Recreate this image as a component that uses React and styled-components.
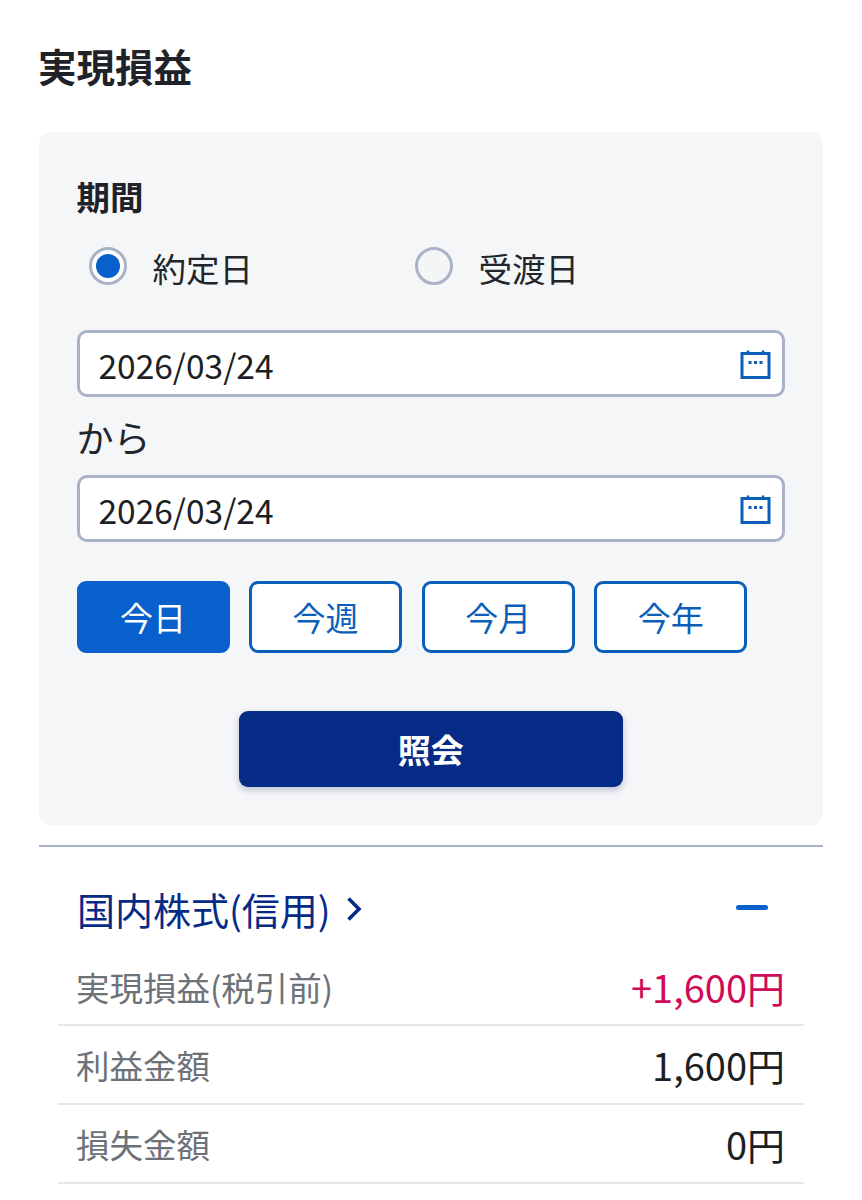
import React from 'react';
import styled, { createGlobalStyle } from 'styled-components';

const GlobalStyle = createGlobalStyle`
  html, body {
    margin: 0;
    padding: 0;
    background: #fff;
  }
  body {
    font-family: "Noto Sans CJK JP", "Noto Sans", sans-serif;
    color: #1c1f24;
  }
  * {
    box-sizing: border-box;
  }
`;

const Page = styled.div`
  width: 862px;
  height: 1200px;
  overflow: hidden;
  padding: 0 39px;
`;

const Title = styled.h1`
  margin: 0 0 0 -1px;
  height: 132px;
  padding-top: 37px;
  font-size: 38.5px;
  line-height: 56px;
  font-weight: 700;
  color: #1f2329;
`;

const Card = styled.section`
  height: 693px;
  background: #f5f6f8;
  border-radius: 12px;
  padding: 40px 38px 0 37.5px;
`;

const FieldLabel = styled.div`
  font-size: 33.5px;
  line-height: 48px;
  font-weight: 700;
  color: #1f2329;
`;

const RadioRow = styled.div`
  display: flex;
  margin-top: 24px;
  padding-left: 12px;
  height: 48px;
  align-items: center;
`;

const RadioOption = styled.label`
  display: flex;
  align-items: center;
  width: 326px;
  font-size: 33.5px;
  line-height: 48px;
  color: #22262c;
`;

const RadioMark = styled.span`
  width: 38px;
  height: 38px;
  margin-right: 26px;
  border-radius: 50%;
  border: 3px solid #a8b3c5;
  background: ${p => (p.$checked ? '#fff' : '#f4f5f6')};
  display: flex;
  align-items: center;
  justify-content: center;
  position: relative;
  top: -2px;

  &::after {
    content: '';
    display: ${p => (p.$checked ? 'block' : 'none')};
    width: 24px;
    height: 24px;
    border-radius: 50%;
    background: #0760cb;
  }
`;

const DateInput = styled.div`
  display: flex;
  align-items: center;
  justify-content: space-between;
  height: 67px;
  margin-top: ${p => p.$top || 0}px;
  padding: 0 10px 0 19px;
  background: #fff;
  border: 3px solid #a8b3c5;
  border-radius: 10px;
  font-size: 33.5px;
  color: #1c1f24;
`;

const DateText = styled.span`
  line-height: 67px;
  position: relative;
  top: 1px;
`;

const Separator = styled.div`
  height: 78px;
  font-size: 37px;
  line-height: 80px;
  color: #22262c;
`;

const RangeRow = styled.div`
  display: flex;
  gap: 19.6px;
  margin-top: 39px;
`;

const RangeButton = styled.button`
  width: 153px;
  height: 72px;
  padding: 0;
  border-radius: 9px;
  border: 3px solid ${p => (p.$active ? '#0760cb' : '#0b5fb8')};
  background: ${p => (p.$active ? '#0760cb' : '#fff')};
  color: ${p => (p.$active ? '#fff' : '#0b5fb8')};
  font-family: inherit;
  font-size: 33px;
`;

const SubmitWrap = styled.div`
  display: flex;
  justify-content: center;
  margin-top: 58px;
`;

const SubmitButton = styled.button`
  width: 384px;
  height: 76px;
  padding: 0;
  border: 0;
  border-radius: 9px;
  background: #062b86;
  color: #fff;
  font-family: inherit;
  font-size: 33px;
  font-weight: 700;
  box-shadow: 0 3px 7px rgba(6, 30, 90, 0.25);
`;

const Divider = styled.hr`
  margin: 20px 0 0;
  border: 0;
  height: 2px;
  background: #a8b3c5;
`;

const SectionHead = styled.div`
  display: flex;
  align-items: center;
  justify-content: space-between;
  height: 101px;
  padding: 22px 55px 0 38px;
`;

const SectionLink = styled.div`
  display: flex;
  align-items: center;
  gap: 15px;
  font-size: 38px;
  line-height: 50px;
  color: #062b86;
`;

const Collapse = styled.span`
  width: 32px;
  height: 5px;
  border-radius: 3px;
  background: #0760cb;
  position: relative;
  top: -1px;
`;

const Rows = styled.div`
  margin: 0 19px;
`;

const Row = styled.div`
  display: flex;
  align-items: center;
  justify-content: space-between;
  height: 79px;
  padding: 0 19px 0 18px;
  border-bottom: 2px solid #e3e6ec;

  &:first-child {
    height: 78px;
  }
`;

const RowLabel = styled.span`
  font-size: 33.5px;
  color: #6c7278;
`;

const RowValue = styled.span`
  font-size: 38px;
  color: ${p => (p.$profit ? '#cf0a56' : '#1c1f24')};
`;

function CalendarIcon() {
  return (
    <svg width="32" height="32" viewBox="0 0 32 32" fill="none" stroke="#0b5fb8">
      <rect x="2" y="5.5" width="27" height="24" strokeWidth="3" />
      <path d="M8 2.5v4M23 2.5v4" strokeWidth="2.5" />
      <path d="M8.5 14.5h3M14 14.5h3M19.5 14.5h3" strokeWidth="3" />
    </svg>
  );
}

function Chevron() {
  return (
    <svg width="16" height="26" viewBox="0 0 16 26" fill="none" stroke="#062b86" strokeWidth="3.6">
      <path d="M2.5 2.5L13 13 2.5 23.5" />
    </svg>
  );
}

const ranges = ['今日', '今週', '今月', '今年'];

const rows = [
  { label: '実現損益(税引前)', value: '+1,600円', profit: true },
  { label: '利益金額', value: '1,600円' },
  { label: '損失金額', value: '0円' },
];

export default function App() {
  return (
    <Page>
      <GlobalStyle />
      <Title>実現損益</Title>
      <Card>
        <FieldLabel>期間</FieldLabel>
        <RadioRow>
          <RadioOption>
            <RadioMark $checked />
            約定日
          </RadioOption>
          <RadioOption>
            <RadioMark />
            受渡日
          </RadioOption>
        </RadioRow>
        <DateInput $top={38}>
          <DateText>2026/03/24</DateText>
          <CalendarIcon />
        </DateInput>
        <Separator>から</Separator>
        <DateInput>
          <DateText>2026/03/24</DateText>
          <CalendarIcon />
        </DateInput>
        <RangeRow>
          {ranges.map((r, i) => (
            <RangeButton key={r} $active={i === 0}>{r}</RangeButton>
          ))}
        </RangeRow>
        <SubmitWrap>
          <SubmitButton>照会</SubmitButton>
        </SubmitWrap>
      </Card>
      <Divider />
      <SectionHead>
        <SectionLink>
          国内株式(信用)
          <Chevron />
        </SectionLink>
        <Collapse />
      </SectionHead>
      <Rows>
        {rows.map(row => (
          <Row key={row.label}>
            <RowLabel>{row.label}</RowLabel>
            <RowValue $profit={row.profit}>{row.value}</RowValue>
          </Row>
        ))}
      </Rows>
    </Page>
  );
}
